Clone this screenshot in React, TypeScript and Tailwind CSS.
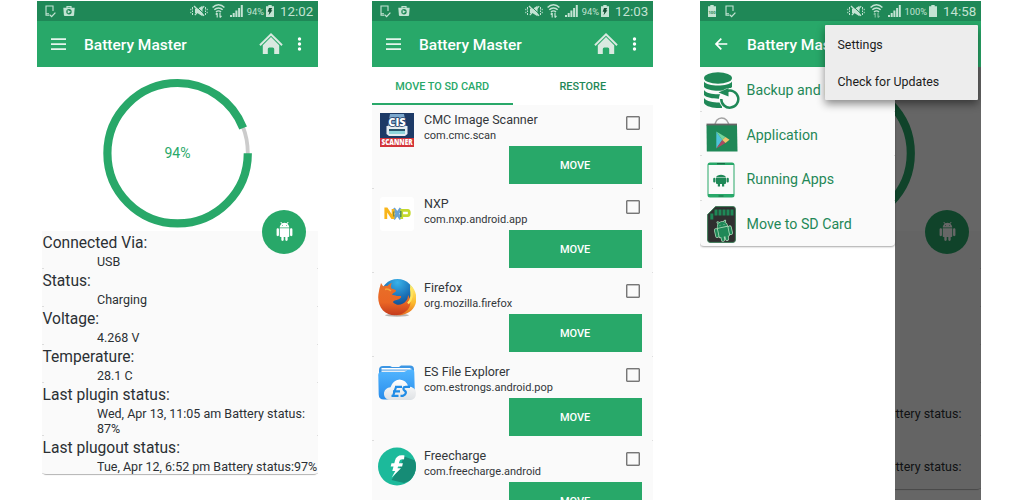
import React from "react";

const ROBOT =
  "M6 18c0 .55.45 1 1 1h1v3.5c0 .83.67 1.5 1.5 1.5s1.5-.67 1.5-1.5V19h2v3.5c0 .83.67 1.5 1.5 1.5s1.5-.67 1.5-1.5V19h1c.55 0 1-.45 1-1V8H6v10zM3.5 8C2.67 8 2 8.67 2 9.5v7c0 .83.67 1.5 1.5 1.5S5 17.33 5 16.5v-7C5 8.67 4.33 8 3.5 8zm17 0c-.83 0-1.5.67-1.5 1.5v7c0 .83.67 1.5 1.5 1.5s1.5-.67 1.5-1.5v-7c0-.83-.67-1.5-1.5-1.5zm-4.97-5.84l1.3-1.3c.2-.2.2-.51 0-.71-.2-.2-.51-.2-.71 0l-1.48 1.48C13.85 1.23 12.95 1 12 1c-.96 0-1.86.23-2.66.63L7.85.15c-.2-.2-.51-.2-.71 0-.2.2-.2.51 0 .71l1.31 1.31C6.97 3.26 6 5.01 6 7h12c0-1.99-.97-3.75-2.47-4.84zM10 5H9V4h1v1zm5 0h-1V4h1v1z";

const TINT = "#c3e3d3";

function DeviceIcon() {
  return (
    <svg width="12" height="13" viewBox="0 0 12 13" fill="none" stroke={TINT} strokeWidth="1.1">
      <path d="M8 6V1H1v9.200h3.200M1 8.800h3" />
      <path d="M4.600 9.600l2 2L10.400 7.600" strokeWidth="1.300" />
    </svg>
  );
}

function PlayBagIcon() {
  return (
    <svg width="12" height="12" viewBox="0 0 12 12">
      <path d="M4 3V1.600h4V3" fill="none" stroke={TINT} strokeWidth="1.200" />
      <path d="M.3 2.800h11.400l-.6 7.200q-.1 1-1 1H1.900q-.9 0-1-1z" fill={TINT} />
      <circle cx="6" cy="6.800" r="2.700" fill="#1f8857" />
      <path d="M4.700 5l3.200 1.800-3.200 1.800z" fill={TINT} />
    </svg>
  );
}

function MuteIcon() {
  return (
    <svg width="18" height="12" viewBox="0 0 18 12" fill="none" stroke={TINT}>
      <path d="M5 3.800h2.700L12.500.8v10.400L7.700 8.200H5z" fill={TINT} stroke="none" />
      <path d="M5 .4l9.800 9" stroke="#1f8857" strokeWidth="1" />
      <path d="M4 1l10 9.800" strokeWidth="1.400" />
      <path d="M14.200 1.200l-2.500 2.600M4.800 10.200l2-2" strokeWidth="1.200" />
      <path d="M2.500 2v2.500M2.500 5.500V7M2.500 8v2M.8 3.800v1.400M.8 6.800v1.400M15.500 2v2.500M15.500 5.500V7M15.500 8v2M17.200 3.800v1.400M17.200 6.800v1.400" />
    </svg>
  );
}

function WifiIcon({ dim }: { dim?: boolean }) {
  return (
    <svg width="13" height="14" viewBox="0 0 13 14" fill="none" stroke={TINT} strokeWidth="1.500">
      <path d="M.6 3.600C4-.1 9-.1 12.400 3.600" />
      <path d="M2.300 5.800c2.400-2.500 6-2.500 8.400 0" />
      <path d="M4 8c1.500-1.500 3.500-1.500 5 0" />
      <g stroke={dim ? "#7fbd9d" : TINT} strokeWidth="1.200">
        <path d="M5.200 9v4.500M3.700 10.500l1.500-1.600M8 8.800v4.600M9.500 11.900L8 13.500" />
      </g>
    </svg>
  );
}

function SignalIcon() {
  return (
    <svg width="13" height="12" viewBox="0 0 13 12" fill={TINT}>
      <rect x="0" y="10" width="2" height="2" />
      <rect x="2.700" y="8" width="2" height="4" />
      <rect x="5.400" y="5.500" width="2" height="6.500" />
      <rect x="8.100" y="3" width="2" height="9" />
      <rect x="10.800" y="0" width="2" height="12" />
    </svg>
  );
}

function BatteryIcon({ bolt, label }: { bolt?: boolean; label?: boolean }) {
  return (
    <svg width="8" height="12" viewBox="0 0 8 12">
      <path d="M2.300 0h3.400v1.300H8V12H0V1.300h2.300z" fill={TINT} />
      {bolt && <path d="M3 3h3.200L5 5.200h1.400L2.600 10.300l.7-3.500H1.700z" fill="#154f35" />}
      {label && (
        <text x="4" y="8.600" fontSize="4.200" fontWeight="700" textAnchor="middle" fill="#1f8857" fontFamily="Roboto, sans-serif">
          100
        </text>
      )}
    </svg>
  );
}

function StatusBar({ time, level, full }: { time: string; level: string; full?: boolean }) {
  return (
    <div className="flex h-5 shrink-0 items-center bg-[#1f8857] pl-2 pr-[5px] text-[#c3e3d3]">
      {full ? (
        <div className="flex items-center gap-[9px]">
          <BatteryIcon label />
          <DeviceIcon />
        </div>
      ) : (
        <div className="flex items-center gap-[6px]">
          <DeviceIcon />
          <PlayBagIcon />
        </div>
      )}
      <div className="ml-auto flex items-center">
        <MuteIcon />
        <div className={full ? "ml-[5px]" : "ml-[4px]"}>
          <WifiIcon dim={full} />
        </div>
        <div className="ml-[5px]">
          <SignalIcon />
        </div>
        <span className="ml-[4px] mt-px text-[9.300px] leading-5">{level}</span>
        <div className="ml-[2px]">
          <BatteryIcon bolt={!full} />
        </div>
        <span className="ml-[6px] mt-px w-[33px] whitespace-nowrap text-[13.300px] leading-5">{time}</span>
      </div>
    </div>
  );
}

function AppBar({ back }: { back?: boolean }) {
  return (
    <div className="flex h-[46px] shrink-0 items-center bg-[#28a869] text-white">
      <div className="w-[47px] pl-[14px]">
        {back ? (
          <svg width="15" height="14" viewBox="0 0 15 14" fill="none" stroke="white" strokeWidth="1.700">
            <path d="M13.300 7H2.300M7.300 1.700L2 7l5.300 5.300" />
          </svg>
        ) : (
          <svg width="15" height="12" viewBox="0 0 15 12" fill="none" stroke="#e3f5ec" strokeWidth="1.700">
            <path d="M0 1.200h15M0 6.200h15M0 11.100h15" />
          </svg>
        )}
      </div>
      <h1 className="whitespace-nowrap pt-px text-[15.500px] font-medium leading-5">Battery Master</h1>
      <div className="ml-auto flex items-center pr-[16px]">
        <svg width="24" height="22" viewBox="0 0 24 22" fill="#d9e9e0">
          <path d="M12 4l8.200 8.200v8.900h-5v-5.200q0-1.500-1.500-1.500h-3.400q-1.500 0-1.500 1.500v5.200h-5v-8.900z" />
          <path d="M12 0l4.700 4.500 7 7-1.300 1.400L12 2.800 1.600 12.900.3 11.500z" />
        </svg>
        <svg className="ml-[14px]" width="5" height="14" viewBox="0 0 5 14" fill="white">
          <circle cx="2.500" cy="2" r="1.700" />
          <circle cx="2.500" cy="7" r="1.700" />
          <circle cx="2.500" cy="12" r="1.700" />
        </svg>
      </div>
    </div>
  );
}

function Nicks() {
  return (
    <div className="pointer-events-none absolute inset-x-0 bottom-0 flex justify-between">
      <i className="h-px w-[1.500px] bg-[#dddddd]" />
      <i className="h-px w-[1.500px] bg-[#dddddd]" />
    </div>
  );
}

type Info = { label: string; lines: string[] };

function BatteryPage({ percent, info }: { percent: number; info: Info[] }) {
  const r = 70.2;
  const len = 2 * Math.PI * r;
  return (
    <div className="relative flex h-full flex-col bg-white">
      <div className="flex h-[164px] shrink-0 justify-center pt-[11px]">
        <svg width="150" height="150" viewBox="0 0 150 150" fill="none">
          <circle cx="74.600" cy="75.200" r="70.200" stroke="#cccccc" strokeWidth="3.800" />
          <circle cx="74.600" cy="75.200" r={r} stroke="#28a869" strokeWidth="8.200" strokeDasharray={`${(len * percent) / 100} ${len}`} />
          <text x="74.500" y="80" textAnchor="middle" fontSize="14" fill="#28a869">
            {percent}%
          </text>
        </svg>
      </div>
      <div className="ml-[5px] rounded-b-sm bg-[#fafafa] text-[#2b3034] shadow-[0_2px_1px_-1px_rgba(0,0,0,0.3)]">
        {info.map((row) => (
          <div key={row.label} className="relative flex flex-col pb-[0.400px]">
            <div className="h-[22.600px] whitespace-nowrap pl-[0.500px] text-[15.600px] leading-[24px]">{row.label}</div>
            <div className="pl-[55px] text-[12.500px] leading-[15px]">
              {row.lines.map((l) => (
                <div key={l} className="h-[15px] whitespace-nowrap">
                  {l}
                </div>
              ))}
            </div>
            <Nicks />
          </div>
        ))}
      </div>
      <div className="absolute left-[225px] top-[142.500px] flex h-[44px] w-[44px] items-center justify-center rounded-full bg-[#28a869]">
        <svg width="19" height="19" viewBox="0 0 24 24" fill="white">
          <path d={ROBOT} />
        </svg>
      </div>
    </div>
  );
}

const batteryInfo: Info[] = [
  { label: "Connected Via:", lines: ["USB"] },
  { label: "Status:", lines: ["Charging"] },
  { label: "Voltage:", lines: ["4.268 V"] },
  { label: "Temperature:", lines: ["28.1 C"] },
  { label: "Last plugin status:", lines: ["Wed, Apr 13, 11:05 am Battery status:", "87%"] },
  { label: "Last plugout status:", lines: ["Tue, Apr 12, 6:52 pm Battery status:97%"] },
];

const fullInfo: Info[] = [
  ...batteryInfo.slice(0, 4),
  { label: "Last plugin status:", lines: ["Mon, Apr 11, 1:05 pm Battery status:", "97%"] },
  { label: "Last plugout status:", lines: ["Mon, Apr 11, 1:02 pm Battery status:", "96%"] },
];

function ScannerIcon() {
  return (
    <svg width="34" height="34" viewBox="0 0 34 34" fontFamily="Open Sans, sans-serif">
      <rect width="34" height="26" fill="#1d3a66" />
      <rect y="25" width="34" height="9" fill="#d3353a" />
      <path d="M10 1h14l2.500 13h-19z" fill="#7ba7cd" />
      <path d="M6.500 13h21v8l-2.500 2H9l-2.500-2z" fill="#e6edf2" />
      <rect x="9" y="16" width="16" height="2" fill="#28556b" />
      <rect x="9" y="18" width="16" height="3" fill="#8fd4dc" />
      <text x="17" y="12.500" fontSize="11" fontWeight="800" textAnchor="middle" fill="white" stroke="#1d3a66" strokeWidth="1.600" paintOrder="stroke">
        CIS
      </text>
      <text x="17" y="32.400" fontSize="8" fontWeight="800" textAnchor="middle" fill="white" textLength="31" lengthAdjust="spacingAndGlyphs">
        SCANNER
      </text>
    </svg>
  );
}

function NxpIcon() {
  return (
    <svg width="34" height="34" viewBox="0 0 34 34" fill="none" strokeWidth="3">
      <rect width="34" height="34" rx="3" fill="white" />
      <path d="M13.500 11.500l7.500 10.500M21 11.500l-7.500 10.500" stroke="#6aa2d4" strokeWidth="3.200" />
      <path d="M5.800 22V12h.8l5.600 8.500h.9V12" stroke="#f9b51a" strokeWidth="2.800" />
      <path d="M21.700 22v-8.700h6q1.600 0 1.600 2.700t-1.600 2.700h-5.500" stroke="#c4d92e" strokeWidth="2.800" />
      <path d="M13.700 14.500v5" stroke="#7f8b3c" strokeWidth="1.400" />
      <path d="M20.800 14v6" stroke="#4b8a5d" strokeWidth="1.400" />
    </svg>
  );
}

function FirefoxIcon() {
  return (
    <svg width="38" height="38" viewBox="0 0 38 38">
      <defs>
        <radialGradient id="globe" cx="0.500" cy="0.100" r="0.900">
          <stop offset="0" stopColor="#38b2ea" />
          <stop offset="0.500" stopColor="#1a6fb5" />
          <stop offset="1" stopColor="#12316e" />
        </radialGradient>
        <linearGradient id="fox" x1="0" y1="0" x2="0" y2="1">
          <stop offset="0" stopColor="#e8702a" />
          <stop offset="0.600" stopColor="#ea6624" />
          <stop offset="1" stopColor="#c43b1d" />
        </linearGradient>
        <linearGradient id="tail" x1="0" y1="0" x2="0" y2="1">
          <stop offset="0" stopColor="#fff27a" />
          <stop offset="0.600" stopColor="#fbb92c" />
          <stop offset="1" stopColor="#e66a22" />
        </linearGradient>
      </defs>
      <ellipse cx="19" cy="36.300" rx="12" ry="1.500" fill="#b9b4b0" />
      <circle cx="19.500" cy="17" r="17" fill="url(#globe)" />
      <path d="M32 5.500c6 5 7.500 13 5.500 19.500C35 32.500 27 37 18 36.300l3-7c7-2 12-6.500 11.500-13.500z" fill="url(#tail)" />
      <path d="M3 4c1 1.500 1.500 2.500 2.500 3.500 1.500-1 3-1 4-.5 1-1.500 2.500-2.500 4.500-3-1.500 2-1.500 3.800-.5 5.500 2 1 4.500 1 4.500 2.200 0 1.500-3.500 2-3.800 4.300 2.500-.5 4 1.500 7 1 2.200-.5 2.300.8 1.600 1.800-2.300 2.700-6 1.700-8 4.200 3.500 4 9.200 3.800 13.200-1 1.500-1.500 2-4 2-6 4 6 3 13-3 17-7 5-16.500 4-22-1.500C.2 26 -.7 19 1 12c.3-2.500 1.400-5.500 2-8z" fill="url(#fox)" />
      <path d="M33 9c1.500 5 1 11-3 15.500" fill="none" stroke="#ffe45c" strokeWidth="2.200" />
      <path d="M7 10.500c2-1 4.300 0 6 1.500" fill="none" stroke="#f6a23a" strokeWidth="1.500" />
    </svg>
  );
}

function EsIcon() {
  return (
    <svg width="38" height="36" viewBox="0 0 38 36">
      <defs>
        <linearGradient id="folder" x1="0" y1="0" x2="0" y2="1">
          <stop offset="0" stopColor="#52b6ff" />
          <stop offset="1" stopColor="#288ceb" />
        </linearGradient>
        <linearGradient id="cloud" x1="0" y1="0" x2="0" y2="1">
          <stop offset="0" stopColor="#ffffff" />
          <stop offset="1" stopColor="#dfe2e5" />
        </linearGradient>
      </defs>
      <path d="M1 5q0-4 4-4h7l2 1h7l2-1.500h9q4 0 4 4v7H1z" fill="#3c96e4" />
      <path d="M3.500 5.500h24l6-2v7h-30z" fill="#e4eef7" />
      <path d="M3.500 3.800h29" stroke="white" strokeWidth="1.600" />
      <path d="M.3 11q-.5-4 3-4h22q2 0 3-1.500Q30 4 34 4.500q2.300 0 2.300 3L36.800 28q0 6.500-5 6.500H6q-5.300 0-5.300-5z" fill="url(#folder)" />
      <path d="M10 34.800q-4.500-2-4-7 1-5 6.500-5.500Q15 15 21.500 14.500q7 .5 8.500 7 8 .5 8 6.500 0 7-6 7H14q-3 0-4-.2z" fill="url(#cloud)" />
      <g fill="none" stroke="#218ce6" strokeWidth="2.200">
        <path d="M24 21.800h-7M22 26.300h-7M20.500 30.800h-7M18.200 21.500l-3.300 10" />
        <path d="M32 21.800h-4.300q-2 0-2.300 1.500t1.300 2.500 1 2.500-2.700 2.500h-2.500" />
      </g>
    </svg>
  );
}

function FreechargeIcon() {
  return (
    <svg width="38" height="39" viewBox="0 0 38 39">
      <defs>
        <clipPath id="coin">
          <circle cx="19" cy="19.500" r="19" />
        </clipPath>
      </defs>
      <circle cx="19" cy="19.500" r="19" fill="#1cba9b" />
      <path d="M26 9.500l14 5v16L26 36l-12.500-3 8-12z" fill="#168c76" clipPath="url(#coin)" />
      <path d="M26.500 8.500c-5.500-1-8.500 1-9.500 5l-.7 2.800h-2.800l-.8 3.300h2.800l-1.200 4.300h3l-3.600 6.600 9.300-9.300h-3.500l.6-1.800h4l.8-3.100h-4l.5-1.800c.5-1.900 2-2.500 4.600-2z" fill="white" />
    </svg>
  );
}

const apps = [
  { name: "CMC Image Scanner", pkg: "com.cmc.scan", icon: <ScannerIcon />, pad: "pt-2 pl-2" },
  { name: "NXP", pkg: "com.nxp.android.app", icon: <NxpIcon />, pad: "pt-2 pl-2" },
  { name: "Firefox", pkg: "org.mozilla.firefox", icon: <FirefoxIcon />, pad: "pt-[6px] pl-1.5" },
  { name: "ES File Explorer", pkg: "com.estrongs.android.pop", icon: <EsIcon />, pad: "pt-2 pl-[5.500px]" },
  { name: "Freecharge", pkg: "com.freecharge.android", icon: <FreechargeIcon />, pad: "pt-[6px] pl-[5.500px]" },
];

function MovePage() {
  return (
    <div className="flex h-full flex-col">
      <div className="flex h-[38px] shrink-0 bg-white text-[10.900px] font-medium">
        <div className="flex flex-1 items-center justify-center border-b-2 border-[#28a869] pt-[4px] text-[#28a869]">MOVE TO SD CARD</div>
        <div className="flex flex-1 items-center justify-center pt-[2px] text-[#1f8857]">RESTORE</div>
      </div>
      <div className="flex flex-col bg-[#fafafa]">
        {apps.map((a) => (
          <div key={a.name} className="relative flex h-[84px] shrink-0">
            <div className={`w-[52px] shrink-0 ${a.pad}`}>{a.icon}</div>
            <div className="flex flex-1 flex-col">
              <div className="flex h-[41px]">
                <div className="flex-1 whitespace-nowrap pt-[6px] text-[#33373a]">
                  <div className="h-[16px] text-[12.500px] leading-[17px]">{a.name}</div>
                  <div className="text-[11px] leading-[18px]">{a.pkg}</div>
                </div>
                <div className="mr-[13px] mt-[11px] h-[14px] w-[14px] rounded-[1px] border-[1.500px] border-[#777777] shadow-[inset_0_0_0_0.500px_#888888]" />
              </div>
              <div className="ml-[84.600px] flex h-[38px] w-[133px] items-center justify-center bg-[#28a869] pt-[2px] text-[11px] font-medium text-white">
                MOVE
              </div>
            </div>
            <Nicks />
          </div>
        ))}
      </div>
    </div>
  );
}

function BackupIcon() {
  return (
    <svg width="37" height="38" viewBox="0 0 37 38" fill="#1f8857">
      <ellipse cx="15" cy="6" rx="14" ry="5.800" />
      <path d="M1 9.500c3 5.300 25 5.300 28 0v5.500C24 20 6 20 1 15z" />
      <path d="M1 18c3 5 19 5.500 24 2.500v5C18 27.500 5 27 1 23z" />
      <path d="M1 26c3 4 12 5 18 4.500v5.500C12 36.500 3 35 1 31z" />
      <circle cx="27" cy="27" r="11" fill="#fafafa" />
      <path d="M23.500 19.300a8.500 8.500 0 1 1-5.200 7.700" fill="none" stroke="#1f8857" strokeWidth="2.500" />
      <path d="M15.500 20.500l10-4.500v8.500z" />
    </svg>
  );
}

function StoreIcon() {
  return (
    <svg width="32" height="36" viewBox="0 0 32 36">
      <path d="M9 10c-1-12 14-12 14 0" fill="none" stroke="#a3a3a3" strokeWidth="1.400" />
      <path d="M.5 8h30.500l.5 26.500H.8z" fill="#1f8857" />
      <path d="M.5 7.500H31" stroke="#666666" strokeWidth="1.800" />
      <path d="M10.300 14.500v17l6-8.500z" fill="#4fc3d9" />
      <path d="M10.300 14.500l9.200 5.400-3.200 3.100z" fill="#75d69c" />
      <path d="M10.300 31.500l9.200-5.400-3.200-3.100z" fill="#a94a62" />
      <path d="M19.500 19.900l4 2.900-4 3.300-3.200-3.100z" fill="#eec36c" />
    </svg>
  );
}

function PhoneIcon() {
  return (
    <svg width="28" height="36" viewBox="0 0 28 36">
      <rect x=".5" y=".5" width="27" height="35" rx="2.500" fill="#28a869" />
      <rect x="1.500" y="3" width="25" height="29" fill="#fafafa" />
      <path d="M10 1.700h8M11.500 34h5" stroke="#186b45" strokeWidth="1.200" />
      <g fill="#1f8857">
        <path d="M9 15.500c.8-3.800 9.200-3.800 10 0zM9 16h10v5q0 1-1 1h-8q-1 0-1-1z" />
        <rect x="6.200" y="15.800" width="2.300" height="4.800" rx="1.100" />
        <rect x="19.500" y="15.800" width="2.300" height="4.800" rx="1.100" />
        <path d="M10.800 21.500H13v3h-2.200zM15 21.500h2.200v3H15z" />
      </g>
    </svg>
  );
}

function SdIcon() {
  return (
    <svg width="29" height="37" viewBox="0 0 29 37">
      <path d="M8.500.6H26q2.400 0 2.400 2.400v31q0 2.400-2.400 2.400H3Q.6 36.400.6 34V8.500z" fill="#2f2f2f" stroke="#3f7d5a" strokeWidth="1" />
      <path d="M7.500 3.500H10.500v6H7.500zM11.500 3.500h3v6h-3zM15.500 3.500h3v6h-3zM19.500 3.500h3v6h-3zM23.500 3.500h3v6h-3zM3.300 7.500h3v6h-3z" fill="#1f8857" />
      <g transform="translate(6.500 15) rotate(-12 10 10) scale(.82)">
        <path d={ROBOT} fill="#1f8857" stroke="#a9d6b5" strokeWidth="2" paintOrder="stroke" />
      </g>
    </svg>
  );
}

const drawer = [
  { label: "Backup and Restore", icon: <BackupIcon />, pad: "pl-[3px] pt-[3px]" },
  { label: "Application", icon: <StoreIcon />, pad: "pl-[6px] pt-px" },
  { label: "Running Apps", icon: <PhoneIcon />, pad: "pl-[7px] pt-[3px]" },
  { label: "Move to SD Card", icon: <SdIcon />, pad: "pl-[7px] pt-[3px]" },
];

function Phone({ children, className }: { children: React.ReactNode; className: string }) {
  return <section className={`relative flex h-[499px] w-[281px] shrink-0 flex-col overflow-hidden bg-white ${className}`}>{children}</section>;
}

export default function App() {
  return (
    <main className="flex h-[500px] w-[1024px] overflow-hidden bg-white pt-px font-['Roboto',sans-serif]">
      <Phone className="ml-[37px]">
        <StatusBar time="12:02" level="94%" />
        <AppBar />
        <div className="min-h-0 flex-1">
          <BatteryPage percent={94} info={batteryInfo} />
        </div>
      </Phone>

      <Phone className="ml-[54px]">
        <StatusBar time="12:03" level="94%" />
        <AppBar />
        <div className="min-h-0 flex-1">
          <MovePage />
        </div>
      </Phone>

      <Phone className="ml-[47px]">
        <StatusBar time="14:58" level="100%" full />
        <AppBar back />
        <div className="relative min-h-0 flex-1">
          <BatteryPage percent={100} info={fullInfo} />
          <div className="absolute inset-0 flex bg-black/60">
            <nav className="w-[195px] bg-white">
              <div className="rounded-b-sm bg-[#fafafa] shadow-[0_1px_2px_rgba(0,0,0,0.35)]">
                {drawer.map((d) => (
                  <div key={d.label} className="relative flex h-[44.700px] items-center">
                    <div className={`w-[46.600px] shrink-0 ${d.pad}`}>{d.icon}</div>
                    <span className="whitespace-nowrap pt-px text-[14.200px] leading-5 text-[#1f8857]">{d.label}</span>
                    <Nicks />
                  </div>
                ))}
              </div>
            </nav>
          </div>
        </div>
        <div className="absolute left-[125px] top-[24px] flex h-[75px] w-[153px] flex-col rounded-[1px] bg-[#ededed] pl-[12.500px] text-[12.400px] text-[#1c1c1c] shadow-[0_4px_8px_rgba(0,0,0,0.45)]">
          <div className="flex h-[38px] items-center pt-[2px]">Settings</div>
          <div className="flex h-[37px] items-center pt-[2px]">Check for Updates</div>
        </div>
      </Phone>
    </main>
  );
}
